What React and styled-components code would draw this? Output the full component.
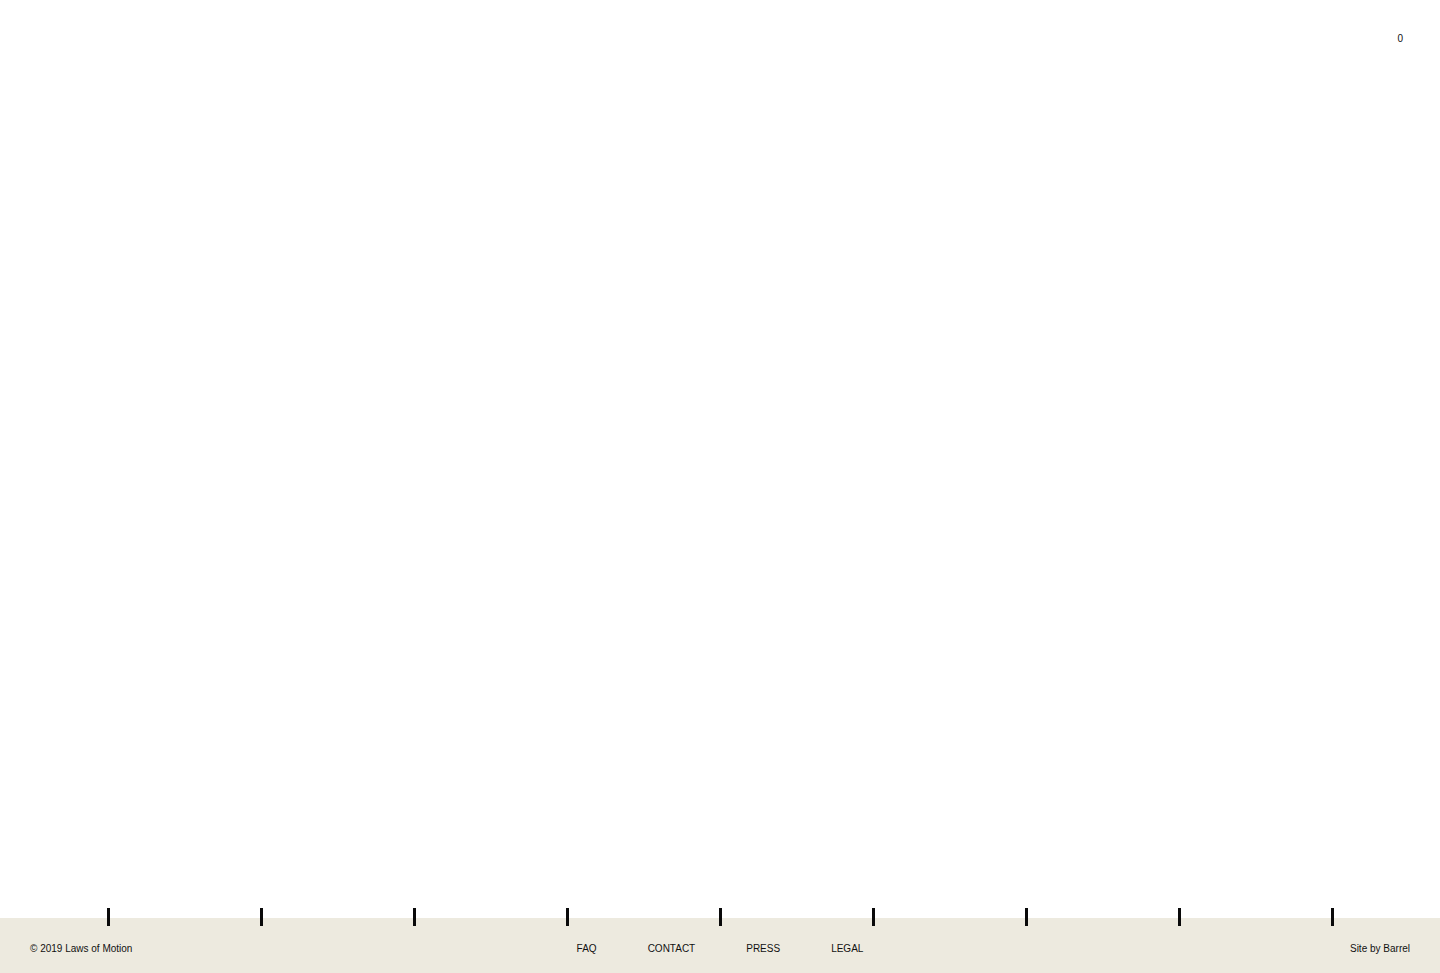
import React from "react";
import styled, { createGlobalStyle } from "styled-components";

const GlobalStyle = createGlobalStyle`
   html, body {
      margin: 0;
      padding: 0;
      background: #ffffff;
   }
   body {
      font-family: "Liberation Sans", Arial, sans-serif;
      color: #111111;
   }
`;

const Page = styled.div`
   display: flex;
   flex-direction: column;
   min-height: 100vh;
`;

const Header = styled.header`
   display: flex;
   justify-content: flex-end;
   padding: 32px 37px 0 0;
`;

const CartCount = styled.span`
   font-size: 10px;
   line-height: 13px;
   color: #111111;
`;

const Main = styled.main`
   flex: 1;
`;

const Footer = styled.footer`
   position: relative;
   height: 55px;
   background: #edeadf;
   display: grid;
   grid-template-columns: 1fr auto 1fr;
   align-items: center;
   padding: 0 30px;
   font-size: 10px;
   line-height: 13px;
   box-sizing: border-box;
`;

const Ticks = styled.div`
   position: absolute;
   top: -10px;
   left: 0;
   right: 0;
   display: flex;
   justify-content: center;
   pointer-events: none;
`;

const TickCell = styled.div`
   width: 153px;
   display: flex;
   justify-content: center;
`;

const Tick = styled.span`
   display: block;
   width: 3px;
   height: 18px;
   background: #0a0a0a;
`;

const Copy = styled.div`
   justify-self: start;
   padding-top: 6px;
`;

const Nav = styled.nav`
   display: flex;
   gap: 51px;
   padding-top: 6px;
`;

const NavLink = styled.a`
   text-transform: uppercase;
   letter-spacing: 0;
   color: #111111;
   text-decoration: none;
`;

const Credit = styled.div`
   justify-self: end;
   padding-top: 6px;
`;

const links = ["FAQ", "Contact", "Press", "Legal"];

export default function App() {
   return (
      <>
         <GlobalStyle />
         <Page>
            <Header>
               <CartCount>0</CartCount>
            </Header>
            <Main />
            <Footer>
               <Ticks>
                  {Array.from({ length: 9 }).map((_, i) => (
                     <TickCell key={i}>
                        <Tick />
                     </TickCell>
                  ))}
               </Ticks>
               <Copy>© 2019 Laws of Motion</Copy>
               <Nav>
                  {links.map((l) => (
                     <NavLink key={l} href="#">
                        {l}
                     </NavLink>
                  ))}
               </Nav>
               <Credit>Site by Barrel</Credit>
            </Footer>
         </Page>
      </>
   );
}
